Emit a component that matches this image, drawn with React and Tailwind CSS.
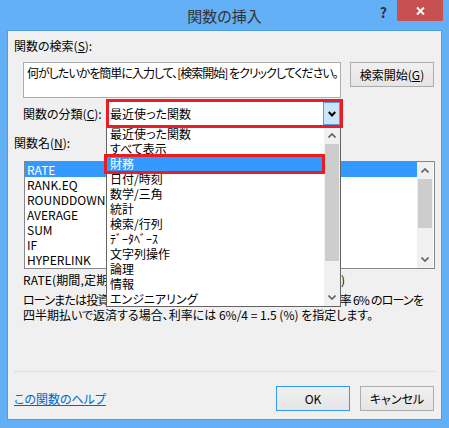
import React from "react";

function Up({ className = "" }) {
  return (
    <svg width="8" height="5" viewBox="0 0 8 5" className={className}>
      <polyline points="0.5,4.5 4,1 7.5,4.5" fill="none" stroke="#606060" strokeWidth="1.6" />
    </svg>
  );
}
function Down({ className = "" }) {
  return (
    <svg width="8" height="5" viewBox="0 0 8 5" className={className}>
      <polyline points="0.5,0.5 4,4 7.5,0.5" fill="none" stroke="#606060" strokeWidth="1.6" />
    </svg>
  );
}

const cats = [
  "最近使った関数",
  "すべて表示",
  "財務",
  "日付/時刻",
  "数学/三角",
  "統計",
  "検索/行列",
  "ﾃﾞｰﾀﾍﾞｰｽ",
  "文字列操作",
  "論理",
  "情報",
  "エンジニアリング",
];

const funcs = ["RATE", "RANK.EQ", "ROUNDDOWN", "AVERAGE", "SUM", "IF", "HYPERLINK"];

export default function App() {
  return (
    <div className="w-[449px] h-[428px] bg-[#63b0f6] flex flex-col overflow-hidden font-['Noto_Sans_CJK_JP','Noto_Sans',sans-serif] [font-feature-settings:'palt'] text-[12px] text-black">
      {/* title bar */}
      <div className="h-[30px] shrink-0 grid grid-cols-[1fr_auto_1fr]">
        <div />
        <div className="flex items-center text-[15px] text-[#333] leading-none pt-[1px]">関数の挿入</div>
        <div className="flex justify-end items-start pr-[6px]">
          <span className="mt-[5px] mr-[10px] text-[14px] font-bold text-[#333] leading-none">?</span>
          <div className="w-[46px] h-[21px] bg-[#c75050] flex items-center justify-center">
            <svg width="9" height="8" viewBox="0 0 9 8">
              <line x1="1" y1="0.5" x2="8" y2="7.5" stroke="white" strokeWidth="2" />
              <line x1="8" y1="0.5" x2="1" y2="7.5" stroke="white" strokeWidth="2" />
            </svg>
          </div>
        </div>
      </div>

      {/* content */}
      <div className="mx-[7px] mb-[8px] flex-1 border border-[#4f9de3] bg-[#f0f0f0] flex flex-col">
        <div className="ml-[6px] mt-[7px] h-[16px] leading-[16px]">
          関数の検索(<span className="underline">S</span>):
        </div>

        <div className="mt-[8px] flex items-start">
          <div className="ml-[15px] w-[318px] h-[36px] border border-[#abadb3] bg-white px-[3px] pt-[1px] leading-[18px] whitespace-nowrap tracking-[-1px] overflow-hidden">
            何がしたいかを簡単に入力して、[検索開始] をクリックしてください。
          </div>
          <div className="ml-[9px] w-[84px] h-[25px] border border-[#acacac] bg-gradient-to-b from-[#f0f0f0] to-[#e5e5e5] flex items-center justify-center">
            検索開始(<span className="underline">G</span>)
          </div>
        </div>

        <div className="mt-[1px] flex items-center h-[29px]">
          <div className="ml-[15px] w-[83px] whitespace-nowrap">
            関数の分類(<span className="underline">C</span>):
          </div>
          <div className="relative w-[237px] h-[29px]">
            {/* dropdown list */}
            <div className="absolute left-0 top-[26px] w-[235px] h-[182px] border border-[#646464] bg-white z-20 flex">
              <div className="flex-1 flex flex-col">
                {cats.map((c) =>
                  c === "財務" ? (
                    <div key={c} className="relative h-[15px] leading-[15px] pl-[3px] bg-[#3399ff] text-white">
                      {c}
                      <div className="absolute -left-[3px] -right-[1px] -top-[2px] -bottom-[3px] border-[3px] border-[#ec1c24]" />
                    </div>
                  ) : (
                    <div key={c} className="h-[15px] leading-[15px] pl-[3px] whitespace-nowrap">
                      {c}
                    </div>
                  )
                )}
              </div>
              <div className="w-[16px] bg-[#f0f0f0] flex flex-col">
                <div className="h-[18px] flex items-center justify-center">
                  <Up />
                </div>
                <div className="h-[117px] mx-[1px] bg-[#cdcdcd]" />
                <div className="flex-1" />
                <div className="h-[17px] flex items-center justify-center">
                  <Down />
                </div>
              </div>
            </div>
            {/* select box */}
            <div className="relative z-30 h-full border-[3px] border-[#ec1c24] bg-white flex items-stretch">
              <div className="flex-1 pl-[1px] flex items-center leading-[16px]">最近使った関数</div>
              <div className="w-[17px] bg-[#cce4f7] border border-[#569de5] flex items-center justify-center">
                <svg width="8" height="6" viewBox="0 0 8 6">
                  <polyline points="0.8,1 4,4.5 7.2,1" fill="none" stroke="#000" strokeWidth="2" />
                </svg>
              </div>
            </div>
          </div>
        </div>

        <div className="ml-[6px] mt-[7px] h-[16px] leading-[16px]">
          関数名(<span className="underline">N</span>):
        </div>

        <div className="mt-[10px] ml-[16px] w-[411px] h-[108px] border border-[#828790] bg-white flex">
          <div className="flex-1 flex flex-col">
            {funcs.map((f, i) => (
              <div
                key={f}
                className={
                  i === 0
                    ? "h-[15px] leading-[15px] pl-[2px] bg-[#3399ff] text-white"
                    : "h-[15px] leading-[15px] pl-[2px]"
                }
              >
                {f}
              </div>
            ))}
          </div>
          <div className="w-[16px] mr-[1px] bg-[#f0f0f0] flex flex-col">
            <div className="h-[16px] flex items-center justify-center">
              <Up />
            </div>
            <div className="mt-[1px] h-[49px] mx-[1px] bg-[#cdcdcd]" />
            <div className="flex-1" />
            <div className="h-[17px] flex items-center justify-center">
              <Down />
            </div>
          </div>
        </div>

        <div className="mt-[3px] ml-[15px] h-[16px] leading-[16px] whitespace-nowrap tracking-[0.15px]">
          RATE(期間,定期支払額,現在価値,将来価値,支払期日,推定値)
        </div>
        <div className="mt-[4px] ml-[15px] leading-[15px] whitespace-nowrap">
          <div className="tracking-[-0.8px]">ローンまたは投資の 1 期間あたりの利率を指定します。たとえば、年率 6% のローンを</div>
          <div>四半期払いで返済する場合、利率には 6%/4 = 1.5 (%) を指定します。</div>
        </div>

        <div className="mt-auto mx-[6px] h-px bg-[#dcdcdc]" />
        <div className="mt-[14px] mb-[8px] h-[25px] flex items-center pl-[6px] pr-[7px]">
          <span className="text-[#0066cc] underline">この関数のヘルプ</span>
          <div className="ml-auto w-[74px] h-[25px] border border-[#3399ff] bg-gradient-to-b from-[#f0f0f0] to-[#e5e5e5] flex items-center justify-center">
            OK
          </div>
          <div className="ml-[10px] w-[74px] h-[25px] border border-[#acacac] bg-gradient-to-b from-[#f0f0f0] to-[#e5e5e5] flex items-center justify-center">
            キャンセル
          </div>
        </div>
      </div>
    </div>
  );
}
